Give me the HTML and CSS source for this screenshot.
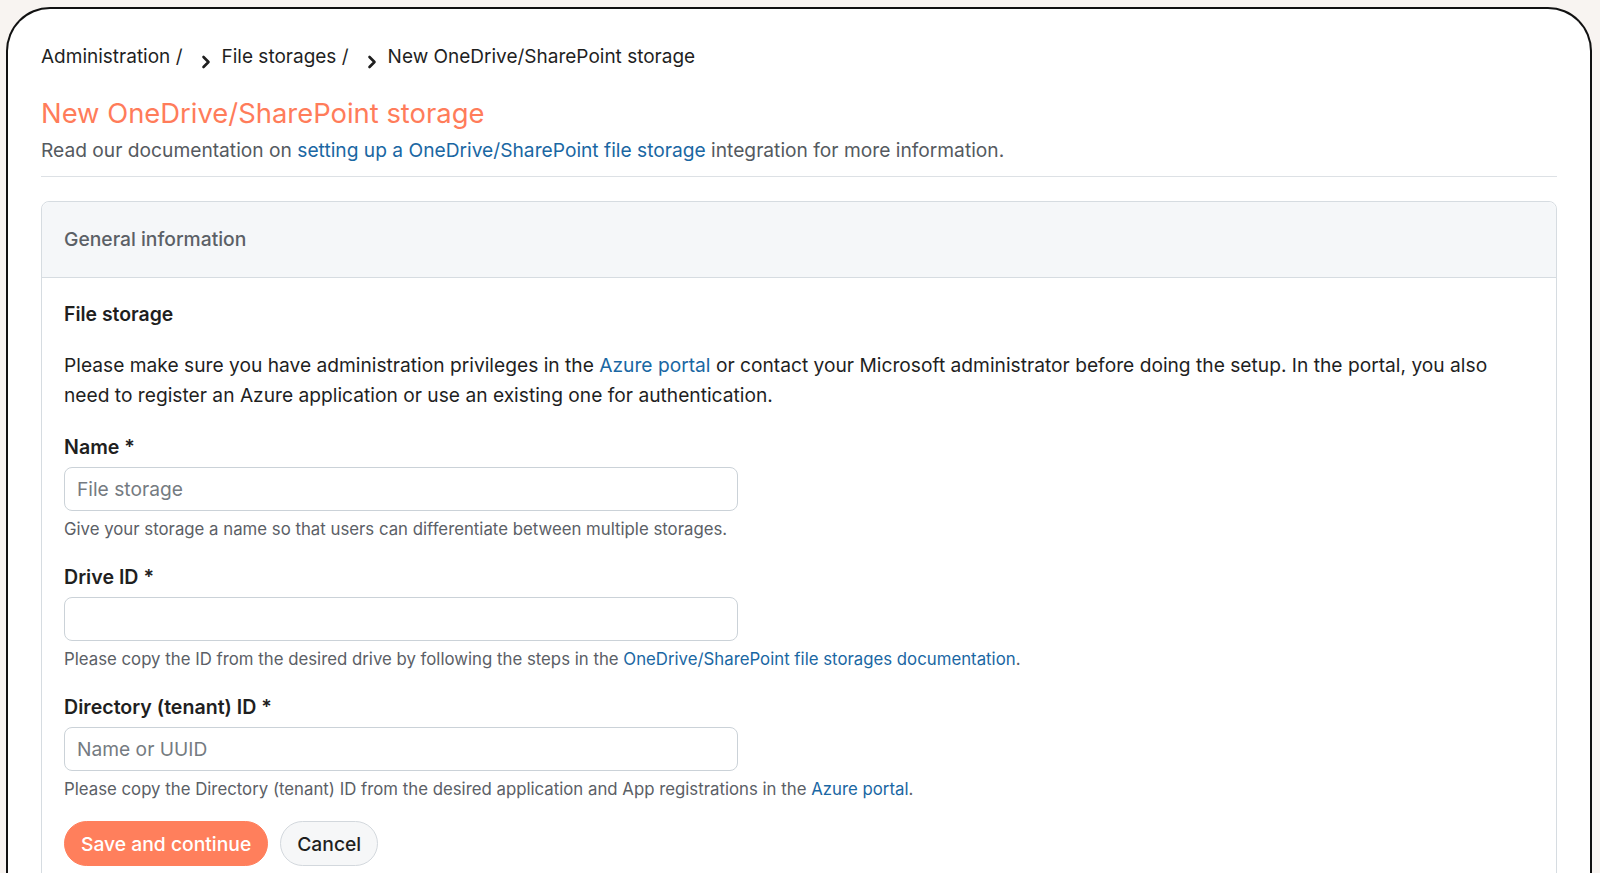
FILE: index.html
```html
<html>
<head>
    <link rel="stylesheet" href="styles.css">
</head>
<body>
    <div class="frame">
        <nav class="breadcrumb">
            <span>Administration /</span>
            <svg class="crumb-arrow" viewBox="0 0 10 14" width="10" height="14">
                <path d="M2.5 2 L7.5 7 L2.5 12" fill="none" stroke="#1f1f1f" stroke-width="2.6" stroke-linecap="round" stroke-linejoin="round"/>
            </svg>
            <span>File storages /</span>
            <svg class="crumb-arrow" viewBox="0 0 10 14" width="10" height="14">
                <path d="M2.5 2 L7.5 7 L2.5 12" fill="none" stroke="#1f1f1f" stroke-width="2.6" stroke-linecap="round" stroke-linejoin="round"/>
            </svg>
            <span>New OneDrive/SharePoint storage</span>
        </nav>

        <div class="page-header">
            <h1 class="page-title">New OneDrive/SharePoint storage</h1>
            <p class="page-description">Read our documentation on <a href="#">setting up a OneDrive/SharePoint file storage</a> integration for more information.</p>
        </div>

        <section class="card">
            <div class="card-header">General information</div>
            <div class="card-body">
                <h2 class="section-title">File storage</h2>
                <p class="section-text">Please make sure you have administration privileges in the <a href="#">Azure portal</a> or contact your Microsoft administrator before doing the setup. In the portal, you also need to register an Azure application or use an existing one for authentication.</p>

                <div class="field">
                    <label for="storage-name">Name *</label>
                    <input id="storage-name" type="text" placeholder="File storage"/>
                    <div class="field-help">Give your storage a name so that users can differentiate between multiple storages.</div>
                </div>

                <div class="field">
                    <label for="drive-id">Drive ID *</label>
                    <input id="drive-id" type="text"/>
                    <div class="field-help">Please copy the ID from the desired drive by following the steps in the <a href="#">OneDrive/SharePoint file storages documentation</a>.</div>
                </div>

                <div class="field">
                    <label for="tenant-id">Directory (tenant) ID *</label>
                    <input id="tenant-id" type="text" placeholder="Name or UUID"/>
                    <div class="field-help">Please copy the Directory (tenant) ID from the desired application and App registrations in the <a href="#">Azure portal</a>.</div>
                </div>

                <div class="actions">
                    <button class="btn btn-primary">Save and continue</button>
                    <button class="btn">Cancel</button>
                </div>
            </div>
        </section>
    </div>
</body>
</html>
```

FILE: styles.css
```css
body {
    margin: 0;
    background: #f8f4f1;
    font-family: Inter, "Noto Sans", sans-serif;
    color: #1f1f1f;
    overflow: hidden;
}

a {
    color: #1a67a3;
    text-decoration: none;
}

.frame {
    margin: 7px 8px 0 6px;
    height: 900px;
    box-sizing: border-box;
    padding: 0 33px;
    background: #fff;
    border: 2px solid #111;
    border-bottom: none;
    border-radius: 44px 44px 0 0;
}

.breadcrumb {
    display: flex;
    align-items: center;
    padding-top: 34px;
    font-size: 19px;
    line-height: 28px;
}

.crumb-arrow {
    margin: 10px 11px 0 18px;
}

.page-header {
    padding-bottom: 12px;
    border-bottom: 1px solid #dde1e5;
}

.page-title {
    margin: 24px 0 0;
    font-size: 27.4px;
    line-height: 36px;
    font-weight: 400;
    color: #ff7c5a;
}

.page-description {
    margin: 5px 0 0;
    font-size: 19.2px;
    line-height: 28px;
    color: #555a60;
}

.card {
    margin-top: 24px;
    border: 1px solid #d6dce1;
    border-radius: 8px;
}

.card-header {
    padding: 23px 22px 24px;
    font-size: 19.3px;
    line-height: 28px;
    font-weight: 500;
    color: #5b6066;
    background: #f5f7f9;
    border-bottom: 1px solid #d6dce1;
    border-radius: 8px 8px 0 0;
}

.card-body {
    padding: 22px 22px 40px;
}

.section-title {
    margin: 0;
    font-size: 19.4px;
    line-height: 28px;
    font-weight: 600;
}

.section-text {
    margin: 23px 0 0;
    font-size: 19.2px;
    line-height: 29.5px;
}

.field {
    display: flex;
    flex-direction: column;
    margin-top: 23px;
}

.field label {
    font-size: 19.6px;
    line-height: 28px;
    font-weight: 600;
}

.field input {
    width: 674px;
    height: 44px;
    margin-top: 6px;
    box-sizing: border-box;
    padding: 0 12px;
    border: 1px solid #cbd2d8;
    border-radius: 8px;
    font-family: inherit;
    font-size: 19.2px;
    color: #1f1f1f;
    outline: none;
}

.field input::placeholder {
    color: #757b81;
}

.field-help {
    margin-top: 7px;
    font-size: 16.8px;
    line-height: 22px;
    color: #5b6066;
}

.actions {
    display: flex;
    gap: 12px;
    margin-top: 21px;
}

.btn {
    height: 45px;
    padding: 0 16px;
    border: 1px solid #d3d8dd;
    border-radius: 23px;
    background: #f6f7f8;
    font-family: inherit;
    font-size: 19.3px;
    font-weight: 500;
    color: #1f1f1f;
    cursor: pointer;
}

.btn-primary {
    border-color: #ff7f5c;
    background: #ff7f5c;
    color: #fff;
}
```
